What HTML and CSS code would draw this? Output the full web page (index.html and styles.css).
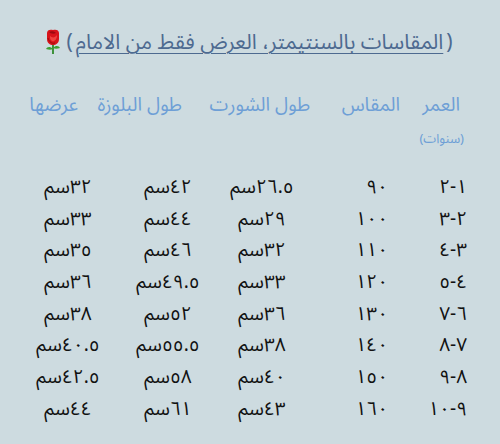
FILE: index.html
```html
<!DOCTYPE html>
<html lang="ar">
<head>
<meta charset="utf-8">
<link rel="stylesheet" href="styles.css">
</head>
<body>
<div class="page">
  <h1 class="title"><span class="paren">(</span> <span class="title-text">المقاسات بالسنتيمتر، العرض فقط من الامام</span><span class="paren">)</span><svg class="rose" viewBox="0 0 18 26" width="18" height="26" aria-hidden="true">
      <path d="M9 15 L9 25" stroke="#2f8a2a" stroke-width="1.8" fill="none"/>
      <path d="M9 20 C6 17 3 18 2 20 C5 21 7 21 9 20 Z" fill="#3da033"/>
      <path d="M9 19 C12 16 15 17 16 19 C13 20 11 20 9 19 Z" fill="#3da033"/>
      <path d="M3 4 C3 1 6 0 9 1 C12 0 15 1 15 4 L15 10 C15 14 12 16 9 16 C6 16 3 14 3 10 Z" fill="#d8141a"/>
      <path d="M5 3 C7 2 10 2 12 4 C10 5 7 5 5 3 Z" fill="#9e0a10"/>
      <path d="M6 7 C8 9 11 9 13 6 C13 11 10 13 8 12 C6 11 6 9 6 7 Z" fill="#f0433e"/>
      <path d="M4 9 C5 13 8 15 11 14" stroke="#8e070c" stroke-width="0.8" fill="none"/>
    </svg></h1>

  <div class="head-row">
    <div class="hcell">العمر<span class="sub">(سنوات)</span></div>
    <div class="hcell">المقاس</div>
    <div class="hcell">طول الشورت</div>
    <div class="hcell">طول البلوزة</div>
    <div class="hcell">عرضها</div>
  </div>

  <div class="data">
    <div class="c1">١-٢</div><div class="c2">٩٠</div><div class="c3">٢٦.٥سم</div><div class="c4">٤٢سم</div><div class="c5">٣٢سم</div>
    <div class="c1">٢-٣</div><div class="c2">١٠٠</div><div class="c3">٢٩سم</div><div class="c4">٤٤سم</div><div class="c5">٣٣سم</div>
    <div class="c1">٣-٤</div><div class="c2">١١٠</div><div class="c3">٣٢سم</div><div class="c4">٤٦سم</div><div class="c5">٣٥سم</div>
    <div class="c1">٤-٥</div><div class="c2">١٢٠</div><div class="c3">٣٣سم</div><div class="c4">٤٩.٥سم</div><div class="c5">٣٦سم</div>
    <div class="c1">٦-٧</div><div class="c2">١٣٠</div><div class="c3">٣٦سم</div><div class="c4">٥٢سم</div><div class="c5">٣٨سم</div>
    <div class="c1">٧-٨</div><div class="c2">١٤٠</div><div class="c3">٣٨سم</div><div class="c4">٥٥.٥سم</div><div class="c5">٤٠.٥سم</div>
    <div class="c1">٨-٩</div><div class="c2">١٥٠</div><div class="c3">٤٠سم</div><div class="c4">٥٨سم</div><div class="c5">٤٢.٥سم</div>
    <div class="c1">٩-١٠</div><div class="c2">١٦٠</div><div class="c3">٤٣سم</div><div class="c4">٦١سم</div><div class="c5">٤٤سم</div>
  </div>
</div>
</body>
</html>
```

FILE: styles.css
```css
html, body {
  margin: 0;
  padding: 0;
  background: #cddbe0;
}
body {
  width: 500px;
  height: 444px;
  overflow: hidden;
  font-family: "Noto Sans Arabic", "DejaVu Sans", sans-serif;
}
.page {
  direction: rtl;
  padding-top: 27px;
}
.title {
  margin: 0;
  font-size: 21px;
  font-weight: normal;
  color: #4d6a90;
  display: flex;
  justify-content: center;
  align-items: center;
  height: 30px;
  line-height: 30px;
}
.title-text {
  text-decoration: underline;
  text-decoration-thickness: 1px;
  text-underline-offset: 4px;
}
.paren {
  padding: 0 3px;
}
.rose {
  margin-right: 1px;
  display: block;
}
.head-row {
  margin-top: 35px;
  display: grid;
  grid-template-columns: 60px 90px 128px 104px 1fr;
  padding-right: 40px;
  font-size: 19px;
  color: #6e9fd6;
  line-height: 26px;
}
.hcell {
  text-align: right;
  white-space: nowrap;
}
.sub {
  display: block;
  font-size: 13px;
  line-height: 20px;
  margin-top: 11px;
  margin-right: -4px;
}
.data {
  margin-top: 22px;
  display: grid;
  grid-template-columns: 80px 75px 96px 92px 108px;
  grid-auto-rows: 31.7px;
  padding-right: 35px;
  font-size: 19px;
  line-height: 24px;
  color: #111;
  align-items: center;
}
.c1, .c2 {
  text-align: right;
  white-space: nowrap;
}
.c1 {
  letter-spacing: 2px;
  margin-right: -2px;
}
.c2 {
  margin-right: -3px;
}
.c3, .c4, .c5 {
  text-align: center;
  white-space: nowrap;
}
```
